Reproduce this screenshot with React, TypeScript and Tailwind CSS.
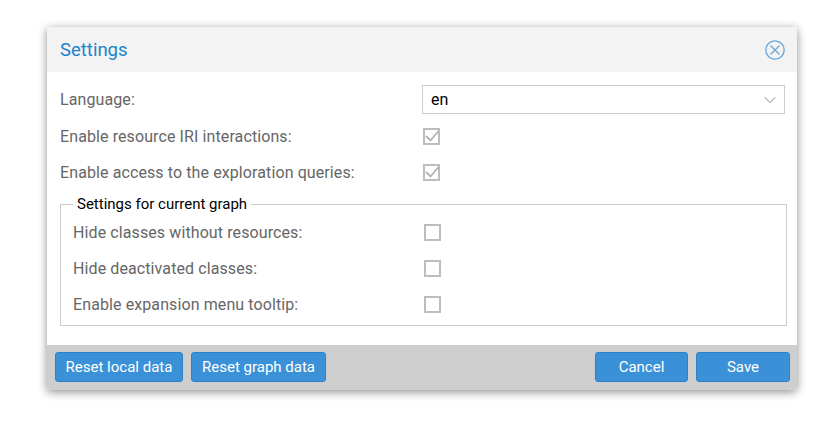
import { ChevronDown } from 'lucide-react';

function CheckBox({ checked }: { checked?: boolean }) {
  return (
    <div className="relative w-[17px] h-[17px] border-2 border-[#bdbdbd] bg-white">
      {checked && (
        <svg viewBox="0 0 17 17" className="absolute left-[-2px] top-[-2px] w-[17px] h-[17px]" fill="none">
          <path d="M3 8 L7.5 12.5 L15.5 3" stroke="#b4b4b4" strokeWidth="1.8" />
        </svg>
      )}
    </div>
  );
}

function Row({ label, checked, labelWidth }: { label: string; checked?: boolean; labelWidth: string }) {
  return (
    <div className="flex items-center h-[36px]">
      <div className={`${labelWidth} pt-[1px] text-[16px] tracking-[0.1px] text-[#666666]`}>{label}</div>
      <CheckBox checked={checked} />
    </div>
  );
}

function Button({ children, width }: { children: React.ReactNode; width: string }) {
  return (
    <button className={`${width} h-[30px] rounded-[3px] border border-[#2f82c6] bg-[#3a91d7] text-white text-[15px]`}>
      {children}
    </button>
  );
}

export default function App() {
  return (
    <div className="h-[428px] bg-white pt-[27px] pl-[47px] font-['Roboto',sans-serif]">
      <div className="w-[750px] h-[363px] flex flex-col rounded-[3px] bg-white overflow-hidden shadow-[0_2px_10px_rgba(0,0,0,0.45)]">
        <div className="h-[45px] shrink-0 flex items-center justify-between bg-[#f3f3f3] pl-[13px] pr-[12px]">
          <span className="pt-[2px] text-[18.5px] text-[#1a84d0]">Settings</span>
          <svg viewBox="0 0 20 20" className="w-[20px] h-[20px]" fill="none" stroke="#66a6da">
            <circle cx="10" cy="10" r="9.2" strokeWidth="1.3" />
            <path d="M5.5 5.5 L14.5 14.5 M14.5 5.5 L5.5 14.5" strokeWidth="1.3" />
          </svg>
        </div>

        <div className="flex-1 pt-[10px] pl-[13px] pr-[10px]">
          <div className="flex items-center h-[36px]">
            <div className="w-[362px] text-[16px] tracking-[0.1px] text-[#666666]">Language:</div>
            <div className="w-[363px] h-[29px] flex items-center justify-between border border-[#cccccc] pl-[8px] pr-[4px] mt-[-1px]">
              <span className="text-[16px] text-black">en</span>
              <ChevronDown size={20} strokeWidth={1.4} className="text-[#bbbbbb]" />
            </div>
          </div>
          <Row label="Enable resource IRI interactions:" checked labelWidth="w-[363px]" />
          <Row label="Enable access to the exploration queries:" checked labelWidth="w-[363px]" />

          <fieldset className="mt-[6px] w-[727px] h-[130px] border border-[#cccccc] pl-[12px]">
            <legend className="px-[4px] text-[15px] leading-[16px] text-black">Settings for current graph</legend>
            <div className="mt-[2px]">
              <Row label="Hide classes without resources:" labelWidth="w-[351px]" />
              <Row label="Hide deactivated classes:" labelWidth="w-[351px]" />
              <Row label="Enable expansion menu tooltip:" labelWidth="w-[351px]" />
            </div>
          </fieldset>
        </div>

        <div className="h-[45px] shrink-0 flex items-start justify-between bg-[#cecece] pt-[7px] pl-[8px] pr-[7px]">
          <div className="flex gap-[8px]">
            <Button width="w-[128px]">Reset local data</Button>
            <Button width="w-[135px]">Reset graph data</Button>
          </div>
          <div className="flex gap-[8px]">
            <Button width="w-[93px]">Cancel</Button>
            <Button width="w-[94px]">Save</Button>
          </div>
        </div>
      </div>
    </div>
  );
}
